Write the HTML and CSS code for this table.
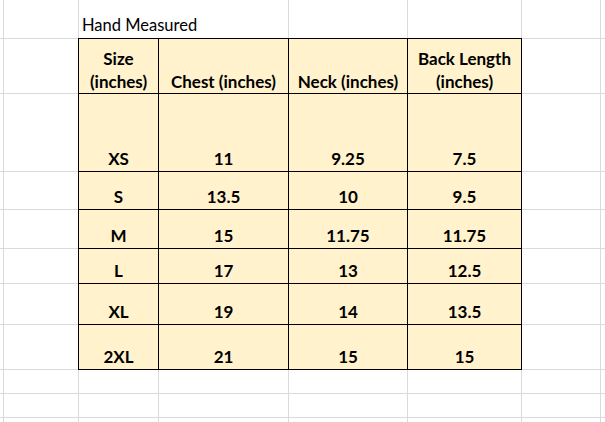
FILE: index.html
```html
<!DOCTYPE html>
<html lang="en">
<head>
<meta charset="utf-8">
<title>Hand Measured</title>
<link rel="stylesheet" href="styles.css">
</head>
<body>
<div class="sheet">
  <div class="title">Hand Measured</div>
  <div class="size-table">
    <div class="cell head">Size<br>(inches)</div>
    <div class="cell head">Chest (inches)</div>
    <div class="cell head">Neck (inches)</div>
    <div class="cell head">Back Length<br>(inches)</div>

    <div class="cell">XS</div><div class="cell">11</div><div class="cell">9.25</div><div class="cell">7.5</div>
    <div class="cell">S</div><div class="cell">13.5</div><div class="cell">10</div><div class="cell">9.5</div>
    <div class="cell">M</div><div class="cell">15</div><div class="cell">11.75</div><div class="cell">11.75</div>
    <div class="cell">L</div><div class="cell">17</div><div class="cell">13</div><div class="cell">12.5</div>
    <div class="cell">XL</div><div class="cell">19</div><div class="cell">14</div><div class="cell">13.5</div>
    <div class="cell">2XL</div><div class="cell">21</div><div class="cell">15</div><div class="cell">15</div>
  </div>

  <!-- row 1 -->
  <div class="c"></div><div class="c"></div><div class="c"></div><div class="c"></div><div class="c"></div><div class="c"></div>
  <!-- rows 2-8 beside the table -->
  <div class="c"></div><div class="c"></div><div class="c"></div><div class="c"></div>
  <div class="c"></div><div class="c"></div><div class="c"></div><div class="c"></div>
  <div class="c"></div><div class="c"></div><div class="c"></div><div class="c"></div>
  <div class="c"></div><div class="c"></div><div class="c"></div><div class="c"></div>
  <div class="c"></div><div class="c"></div><div class="c"></div><div class="c"></div>
  <div class="c"></div><div class="c"></div><div class="c"></div><div class="c"></div>
  <div class="c"></div><div class="c"></div><div class="c"></div><div class="c"></div>
  <!-- rows 9-11 -->
  <div class="c"></div><div class="c"></div><div class="c"></div><div class="c"></div><div class="c"></div><div class="c"></div><div class="c"></div><div class="c"></div>
  <div class="c"></div><div class="c"></div><div class="c"></div><div class="c"></div><div class="c"></div><div class="c"></div><div class="c"></div><div class="c"></div>
  <div class="c"></div><div class="c"></div><div class="c"></div><div class="c"></div><div class="c"></div><div class="c"></div><div class="c"></div><div class="c"></div>
</div>
</body>
</html>
```
FILE: styles.css
```css
html, body {
  margin: 0;
  padding: 0;
  background: #ffffff;
  overflow: hidden;
}

.sheet {
  display: grid;
  width: 605px;
  height: 422px;
  grid-template-columns: 3px 74px 79px 129px 118px 113px 78px 1fr;
  grid-template-rows: 38px 54px 77px 37px 38px 34px 40px 44px 23px 23px 1fr;
  gap: 1px;
  background: #dadada;
  font-family: Lato, "Noto Sans", sans-serif;
  color: #000;
}

.c {
  background: #ffffff;
}

.title {
  grid-column: 3 / 5;
  grid-row: 1;
  background: #ffffff;
  display: flex;
  align-items: flex-end;
  padding: 0 0 3px 3px;
  font-size: 16.5px;
  line-height: 20px;
  font-weight: 400;
}

.size-table {
  grid-column: 3 / 7;
  grid-row: 2 / 9;
  display: grid;
  grid-template-columns: 79px 129px 118px 113px;
  grid-template-rows: 54px 77px 37px 38px 34px 40px 44px;
  gap: 1px;
  background: #000000;
  outline: 1px solid #000000;
}

.cell {
  background: #fff2cc;
  display: flex;
  align-items: flex-end;
  justify-content: center;
  text-align: center;
  font-weight: 700;
  font-size: 17px;
  line-height: 20px;
  padding-bottom: 2px;
  white-space: nowrap;
}

.head {
  line-height: 23px;
  padding-bottom: 0;
}
```
